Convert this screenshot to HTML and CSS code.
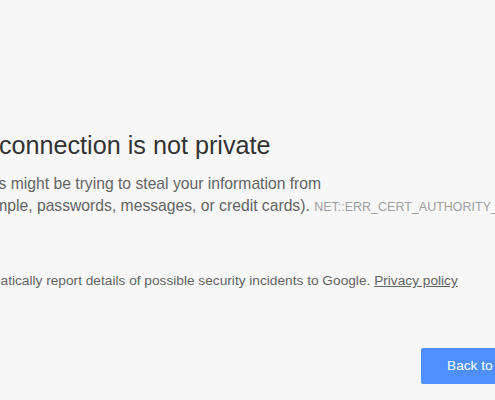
FILE: index.html
```html
<!DOCTYPE html>
<html lang="en">
<head>
  <meta charset="UTF-8">
  <meta name="viewport" content="width=device-width, initial-scale=1.0">
  <title>Privacy error</title>
  <link rel="stylesheet" href="styles.css">
</head>
<body>
  <div class="interstitial-wrapper">
    <h1 class="main-title">Your connection is not private</h1>

    <p class="main-message">
      Attackers might be trying to steal your information from<br>
      (for example, passwords, messages, or credit cards). <span class="error-code">NET::ERR_CERT_AUTHORITY_INVALID</span>
    </p>

    <p class="report-option">
      Automatically report details of possible security incidents to Google. <a href="#" class="privacy-link">Privacy policy</a>
    </p>

    <div class="nav-wrapper">
      <button class="primary-button">Back to safety</button>
    </div>
  </div>
</body>
</html>
```

FILE: styles.css
```css
html, body {
  margin: 0;
  padding: 0;
  overflow: hidden;
}

body {
  font-family: 'Liberation Sans', Arial, sans-serif;
  background-color: #f7f7f7;
  color: #646464;
  font-size: 15.7px;
}

.interstitial-wrapper {
  width: 618px;
  margin-left: -59px;
  padding-top: 130px;
  white-space: nowrap;
}

.main-title {
  font-size: 25.2px;
  font-weight: normal;
  line-height: 30px;
  color: #333;
  margin: 0 0 13px;
}

.main-message {
  line-height: 22px;
  margin: 0;
}

.error-code {
  font-size: 12.5px;
  color: #a0a0a0;
}

.report-option {
  font-size: 13.7px;
  line-height: 22px;
  margin: 52px 0 0;
  padding-left: 20px;
}

.privacy-link {
  color: #646464;
  text-decoration: underline;
}

.nav-wrapper {
  display: flex;
  justify-content: flex-end;
  margin-top: 56px;
}

.primary-button {
  font-family: inherit;
  font-size: 13.7px;
  color: #fff;
  background-color: #4e8ffc;
  border: none;
  border-radius: 2px;
  height: 36px;
  padding: 0 26px 2px;
}
```
